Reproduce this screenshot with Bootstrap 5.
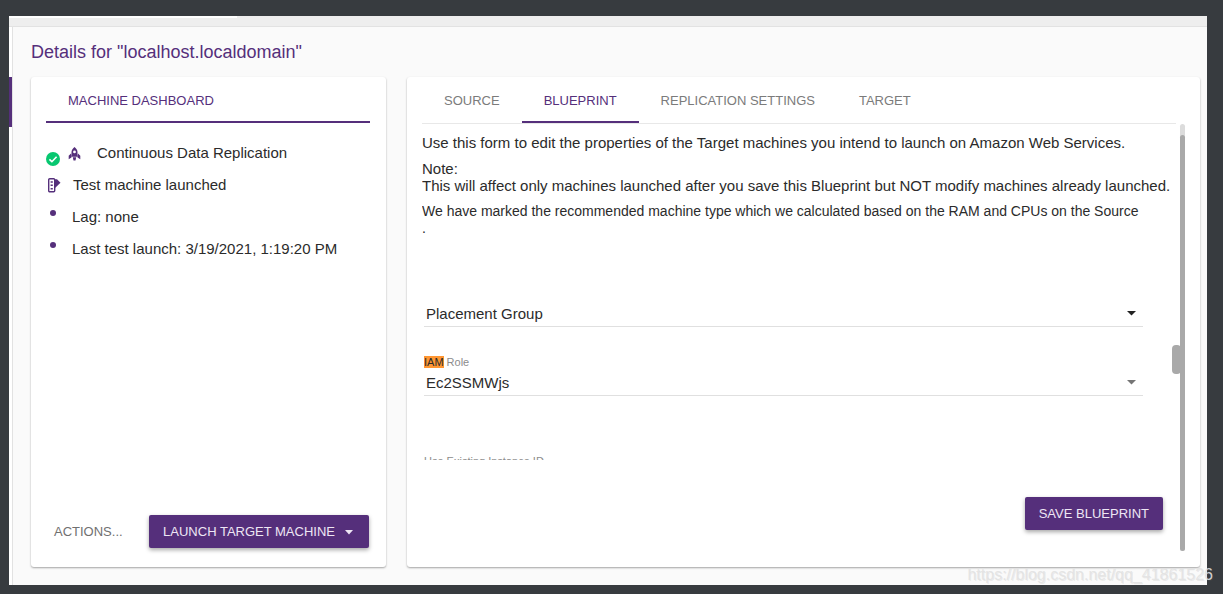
<!DOCTYPE html>
<html lang="en">
<head>
<meta charset="utf-8">
<meta name="viewport" content="width=device-width, initial-scale=1">
<title>Details for "localhost.localdomain"</title>
<link href="https://cdn.jsdelivr.net/npm/bootstrap@5.3.0/dist/css/bootstrap.min.css" rel="stylesheet">
<style>
:root { --brand: #552f7b; --rule: #e0e0e0; }
body { font-family: "Liberation Sans", Arial, sans-serif; font-size: 15px; line-height: 17px; color: #2b2b2b; background: #373b3f; padding: 16px 16px 9px 9px; }
.app-shell { background: #fafafa; }
.top-strip { height: 11px; background: #eee; border-bottom: 1px solid #e2e2e2; }
.strip-tab { width: 19%; height: 2px; background: #fff; }
.side-rail { width: 4px; background: #fff; border-right: 1px solid #e2e2e2; padding-top: 50px; }
.rail-mark { height: 50px; width: 3px; background: var(--brand); }
.page-main { padding: 14px 7px 18px 18px; }
.page-title { font-size: 18px; line-height: 22px; color: var(--brand); margin: 0 0 14px; font-weight: 400; }
.panels { display: grid; grid-template-columns: 355fr 793fr; gap: 21px; }
.panel { background: #fff; border-radius: 3px; box-shadow: 0 1px 2px rgba(0,0,0,.35); min-width: 0; }
.tab-btn { border: 0; background: none; font-size: 13px; line-height: 17px; padding: 15px 22px 12px; color: #7b7b7b; border-bottom: 2px solid transparent; white-space: nowrap; }
.tab-btn.active { color: var(--brand); border-bottom-color: var(--brand); }
.tab-row { border-bottom: 1px solid #e8e8e8; }
.panel-inset { padding: 0 16px 0 15px; }
.form-column { padding-left: 15px; min-width: 0; }
.status-list { margin: 21px 0 0; padding: 0 15px; list-style: none; }
.status-list li { display: flex; height: 32px; }
.status-list .dot { width: 6px; height: 6px; border-radius: 50%; background: var(--brand); margin: 2px 16px 0 4px; }
.launch-icon { margin: 2px 12px 0 1px; }
.rocket-icon { margin: 3px 16px 0 8px; }
.check-icon { margin-top: 8px; }
.btn-brand { --bs-btn-color: #eee6f4; --bs-btn-bg: #552f7b; --bs-btn-hover-color: #fff; --bs-btn-hover-bg: #472668; --bs-btn-border-width: 0; --bs-btn-border-radius: 2px; --bs-btn-padding-x: 14px; --bs-btn-padding-y: 8px; --bs-btn-font-size: 13px; --bs-btn-line-height: 17px; box-shadow: 0 2px 4px rgba(0,0,0,.35); }
.btn-plain { --bs-btn-color: #707070; --bs-btn-border-width: 0; --bs-btn-padding-x: 8px; --bs-btn-padding-y: 8px; --bs-btn-font-size: 13px; --bs-btn-line-height: 17px; }
.side-actions { padding: 0 17px 19px 15px; }
.form-scroll { height: 336px; overflow: hidden; padding-top: 10px; }
.form-scroll p { margin: 0 0 9px; }
.form-scroll .hint { font-size: 14px; }
.form-fields { margin: 63px 33px 0 2px; }
.field-row { margin-top: 29px; }
.field-row-far { margin-top: 59px; }
.field-label { display: block; font-size: 11px; line-height: 13px; color: #8c8c8c; }
.field-label mark { padding: 0; background: #ff9632; color: #2b2b2b; }
.field-pick { display: block; width: 100%; height: 27px; border: 0; border-bottom: 1px solid var(--rule); border-radius: 0; padding: 0 20px 0 2px; appearance: none; font-size: 15px; color: #2b2b2b; background: #fff; }
.pick-wrap { position: relative; }
.pick-wrap svg { position: absolute; right: 7px; top: 11px; pointer-events: none; }
.save-row { padding: 0 13px 37px 0; }
.bar-track { position: relative; width: 5px; margin: 47px 15px 16px 4px; background: #dcdcdc; border-radius: 3px; padding-top: 11px; }
.bar-thumb { height: 100%; background: #a9a9a9; border-radius: 3px; }
.bar-grip { position: absolute; right: 4px; top: 221px; width: 9px; height: 29px; background: #a9a9a9; border-radius: 4px; }
.site-credit { position: absolute; right: 10px; bottom: 10px; font-size: 16px; line-height: 18px; color: rgba(226,226,226,.9); text-shadow: 1px 1px 0 rgba(120,120,120,.12); text-decoration: none; }
</style>
</head>
<body class="min-vh-100 d-flex position-relative">
<div class="app-shell flex-grow-1 d-flex flex-column">
  <div class="top-strip"><div class="strip-tab"></div></div>
  <div class="d-flex flex-grow-1">
    <aside class="side-rail flex-shrink-0"><div class="rail-mark"></div></aside>
    <main class="page-main flex-grow-1 d-flex flex-column">
      <h1 class="page-title">Details for "localhost.localdomain"</h1>
      <div class="panels flex-grow-1">
        <section class="panel d-flex flex-column">
          <div class="panel-inset d-flex"><button type="button" class="tab-btn active flex-grow-1 text-start">MACHINE DASHBOARD</button></div>
          <ul class="status-list">
            <li>
              <svg class="check-icon" width="14" height="14" viewBox="0 0 14 14"><circle cx="7" cy="7" r="7" fill="#07c770"/><path d="M3.400 7.300l2.500 2.400 4.700-5" fill="none" stroke="#fff" stroke-width="1.600"/></svg>
              <svg class="rocket-icon" width="13" height="14" viewBox="0 0 13 14"><path fill="#552f7b" fill-rule="evenodd" d="M6.500 0C4.500 1.600 3.500 3.300 3.500 5.200V9.800H9.500V5.200C9.500 3.300 8.500 1.600 6.500 0ZM6.500 3.500a1.400 1.400 0 1 1 0 2.800a1.400 1.400 0 0 1 0-2.800ZM3 6.500L.7 8.700V12.300L3.500 10.600ZM10 6.500L12.300 8.700V12.300L9.500 10.600ZM4.800 10.200H8.200L7.500 13.500H5.500Z"/></svg>
              <span>Continuous Data Replication</span>
            </li>
            <li>
              <svg class="launch-icon flex-shrink-0" width="14" height="15" viewBox="0 0 14 15"><rect x="1.700" y=".7" width="6" height="13" rx="1" fill="#fff" stroke="#552f7b" stroke-width="1.400"/><path d="M3.600 3.200h2.200v1.600H3.600zM3.600 6.500h2.200v1.600H3.600zM3.600 10h2.200v1.600H3.600z" fill="#552f7b"/><path d="M8 1.200h2L13.500 4.800 8 10Z" fill="#552f7b"/></svg>
              <span>Test machine launched</span>
            </li>
            <li><i class="dot"></i><span>Lag: none</span></li>
            <li><i class="dot"></i><span>Last test launch: 3/19/2021, 1:19:20 PM</span></li>
          </ul>
          <div class="side-actions mt-auto d-flex justify-content-between">
            <button type="button" class="btn btn-plain">ACTIONS...</button>
            <button type="button" class="btn btn-brand">LAUNCH TARGET MACHINE<svg class="ms-2" width="12" height="9" viewBox="0 0 12 9"><path d="M2 2h8L6 6.500z" fill="#eee6f4"/></svg></button>
          </div>
        </section>
        <section class="panel d-flex">
          <div class="form-column flex-grow-1 d-flex flex-column">
            <nav class="tab-row d-flex">
              <button type="button" class="tab-btn">SOURCE</button>
              <button type="button" class="tab-btn active">BLUEPRINT</button>
              <button type="button" class="tab-btn">REPLICATION SETTINGS</button>
              <button type="button" class="tab-btn">TARGET</button>
            </nav>
            <div class="form-scroll">
              <p>Use this form to edit the properties of the Target machines you intend to launch on Amazon Web Services.</p>
              <p>Note:<br>This will affect only machines launched after you save this Blueprint but NOT modify machines already launched.</p>
              <p class="hint">We have marked the recommended machine type which we calculated based on the RAM and CPUs on the Source<br>.</p>
              <form class="form-fields">
                <div class="pick-wrap">
                  <select class="field-pick" aria-label="Placement Group"><option>Placement Group</option></select>
                  <svg width="9" height="5" viewBox="0 0 9 5"><path d="M0 0h9L4.500 4.500z" fill="#222"/></svg>
                </div>
                <div class="field-row">
                  <label class="field-label" for="iam"><mark>IAM</mark> Role</label>
                  <div class="pick-wrap">
                    <select class="field-pick" id="iam"><option>Ec2SSMWjs</option></select>
                    <svg width="9" height="5" viewBox="0 0 9 5"><path d="M0 0h9L4.500 4.500z" fill="#757575"/></svg>
                  </div>
                </div>
                <div class="field-row-far">
                  <label class="field-label" for="inst">Use Existing Instance ID</label>
                  <select class="field-pick" id="inst"><option></option></select>
                </div>
              </form>
            </div>
            <div class="save-row mt-auto text-end"><button type="button" class="btn btn-brand">SAVE BLUEPRINT</button></div>
          </div>
          <div class="bar-track flex-shrink-0"><div class="bar-thumb"></div><div class="bar-grip"></div></div>
        </section>
      </div>
    </main>
  </div>
</div>
<a class="site-credit" href="#">https://blog.csdn.net/qq_41861526</a>
<script src="https://cdn.jsdelivr.net/npm/bootstrap@5.3.0/dist/js/bootstrap.bundle.min.js"></script>
</body>
</html>
